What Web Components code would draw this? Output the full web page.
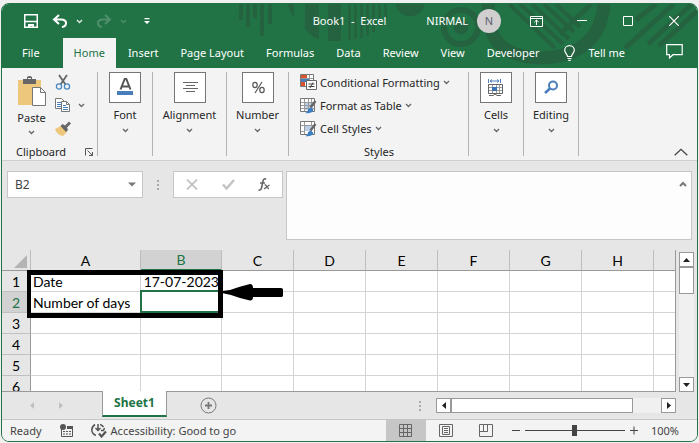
<!DOCTYPE html>
<html lang="en">
<head>
<meta charset="utf-8">
<title>Book1 - Excel</title>
<style>
html{background:#f0f0f0}
body{margin:0;font:11px/16px "Noto Sans","Open Sans",sans-serif;color:#262626}
</style>
</head>
<body>
<xl-window>
  <xl-header slot="header"></xl-header>
  <xl-ribbon slot="ribbon">
    <xl-clipboard></xl-clipboard>
    <xl-group label="Font" style="--w:55px"><svg width="31" height="29" viewBox="0 0 31 29"><path d="M10.500 16.500 14.700 6h1.600l4.200 10.500M12 13.500h7" fill="none" stroke="#555" stroke-width="2"/><path d="M7 18h16v4H7z" fill="#4a7ebb"/></svg></xl-group>
    <xl-group label="Alignment" style="--w:74px"><svg width="31" height="29" viewBox="0 0 31 29"><path d="M8 9.500h15M11 12.500h9M8 15.500h15M11 18.500h9" stroke="#666"/></svg></xl-group>
    <xl-group label="Number" style="--w:62px"><svg width="31" height="29" viewBox="0 0 31 29" fill="none" stroke="#555" stroke-width="1.200"><ellipse cx="12" cy="12" rx="2.200" ry="2.700"/><ellipse cx="19" cy="17" rx="2.200" ry="2.700"/><path d="m19 9-7 11"/></svg></xl-group>
    <xl-styles></xl-styles>
    <xl-group label="Cells" style="--w:55px"><svg width="31" height="29" viewBox="0 0 31 29" fill="none"><path d="M7.500 6v4M19.500 6v4M9 8h9m-7-1.500L9 8l2 1.500m5-3L18 8l-2 1.500" stroke="#4a7ebb"/><path d="M7.500 11.500h14v9h-14zM7.500 14.500h14M7.500 17.500h14M11.500 11.500v9M15.500 11.500v9M18.500 11.500v9" stroke="#999"/><path d="M7.500 11.500h14v9h-14zM8 22.500h4l2-1.500 2 1.500h4" stroke="#666"/><path d="M11 14h5v4h-5z" fill="#3a72b5"/></svg></xl-group>
    <xl-group label="Editing" style="--w:55px"><svg width="31" height="29" viewBox="0 0 31 29" fill="none" stroke="#4a7ebb"><circle cx="17" cy="12.500" r="4" stroke-width="2"/><path d="m14 15.500-5 4.500" stroke-width="2.600"/></svg></xl-group>
  </xl-ribbon>
  <xl-formula slot="formula" cell="B2"></xl-formula>
  <xl-grid slot="grid"></xl-grid>
  <xl-sheets slot="sheets" name="Sheet1"></xl-sheets>
  <xl-status slot="status"></xl-status>
</xl-window>
<script>
const base = `*{box-sizing:border-box}svg{display:block;flex:none}
button{appearance:none;background:none;border:0;padding:0;margin:0;font:inherit;color:inherit;display:flex;align-items:center;justify-content:center;flex:none}
input{font:inherit;color:inherit;border:0;margin:0;padding:0;outline:0;background:none;min-width:0}`;
const define = (name, render) => customElements.define(name, class extends HTMLElement {
  connectedCallback() {
    const [css, html] = render(this);
    const t = document.createElement('template');
    t.innerHTML = `<style>${base}${css}</style>${html}`;
    this.attachShadow({mode: 'open'}).append(t.content.cloneNode(true));
  }
});
const chev = (c = '#666') => `<svg width="7" height="5" viewBox="0 0 7 5"><path d="m1 1 2.500 2.500L6 1" fill="none" stroke="${c}" stroke-width="1.300"/></svg>`;
const dots = `<svg width="2" height="10" viewBox="0 0 2 10"><path d="M0 0h2v2H0zM0 4h2v2H0zM0 8h2v2H0z" fill="#aaa"/></svg>`;

define('xl-window', () => [`
:host{display:flex;flex-direction:column;height:calc(100vh - 4px);margin:3px 1px 1px;border:1px solid #217346;border-radius:8px;overflow:hidden;background:#e6e6e6}
:host,.grid{box-sizing:border-box}.grid{flex:1;min-height:0;display:flex}::slotted(xl-grid){flex:1;min-width:0}`,
`<slot name="header"></slot><slot name="ribbon"></slot><slot name="formula"></slot><div class="grid"><slot name="grid"></slot></div><slot name="sheets"></slot><slot name="status"></slot>`]);

define('xl-header', () => [`
:host{display:block;position:relative;background:#217346;color:#fff}
.art{position:absolute;top:0;right:0}
.bar{position:relative;display:grid;grid-template-columns:1fr auto 1fr;align-items:center;height:34px}
.quick{display:flex;align-items:center;padding-left:22px}
.quick .small{margin-left:8px}.quick .more{margin-left:17px}.quick .redo{margin-left:13px}.quick .undo{margin-left:14px}
.title{white-space:pre}
.win{display:flex;align-items:center;justify-content:flex-end}
.avatar{width:24px;height:24px;border-radius:50%;background:#d0cece;color:#5b6070;display:grid;place-items:center;margin:0 12px 0 9px}
.win button{width:46px;height:32px}
nav{position:relative;display:flex;height:30px;padding-left:9px;padding-right:14px}
nav button{padding:0 11px 1px;height:30px}
nav .on{background:#f3f3f3;color:#217346;margin:0 1px 0 12px}
nav .tell{gap:13px;padding-left:14px}nav .talk{margin-left:auto;padding:0 0 4px}`,
`<svg class="art" width="467" height="64" viewBox="230 4 467 64" fill="none" stroke="#25623f">
<path d="M241 4v16M248 4v23M255 4v14M262 4v32M270 4v20" stroke-width="4"/>
<path d="M287 4h7v14zM305 4h14v35q-8-2-14-10zM328 4h13v37h-13z" fill="#25623f" stroke="none"/>
<path d="M349.500 4v36M355.500 4v35M361.500 4v34M367.500 4v32M373.500 4v28M379.500 4v22M385.500 4v14" stroke-width="2.500"/>
<path d="M396 4h28a14 12 0 0 1-28 0z" fill="#25623f" stroke="none"/>
<circle cx="461" cy="27" r="17" stroke-width="6"/><circle cx="461" cy="27" r="7" fill="#25623f"/>
<path d="M496 4q-7 57 55 57 58-4 60-57" stroke-width="13" transform="translate(-7 -3)"/>
<path d="m509 4 46 44M520 4l43 40M532 4l37 35M544 4l30 28M556 4l24 23" stroke-width="4"/>
<path d="m560 34 31-30M625 48l49-44M648 44l44-40M636 20l20-16M659 46l38-35" stroke-width="5"/></svg>
<div class="bar">
<div class="quick">
<button aria-label="Save"><svg width="14" height="14" viewBox="0 0 14 14"><path d="M.75.75h12.500v12.500H.75zM1 7.500h12" fill="none" stroke="#fff" stroke-width="1.500"/><path d="M4 10h6v4H8.500v-2H6.500v2H4z" fill="#fff"/></svg></button>
<button class="undo" aria-label="Undo"><svg width="16" height="14" viewBox="0 0 16 14" fill="none" stroke="#fff" stroke-width="2"><path d="M7 1 2 5.500 7 10M2 5.500h7q5 0 5 3.500t-4 4"/></svg></button>
<button class="small" aria-label="Undo list">${chev('#dfeee5')}</button>
<button class="redo" aria-label="Redo"><svg width="16" height="14" viewBox="0 0 16 14" fill="none" stroke="#4f8f6b" stroke-width="2"><path d="m9 1 5 4.500L9 10m5-4.500H7Q2 5.500 2 9t4 4"/></svg></button>
<button class="small" aria-label="Redo list">${chev('#4f8f6b')}</button>
<button class="more" aria-label="Customize"><svg width="6" height="7" viewBox="0 0 6 7"><path d="M.5 0h5v1.200h-5zM0 3h6L3 6z" fill="#fff"/></svg></button>
</div>
<div class="title">Book1  -  Excel</div>
<div class="win"><span>NIRMAL</span><span class="avatar">N</span>
<button aria-label="Ribbon display"><svg width="13" height="11" viewBox="0 0 13 11" fill="none" stroke="#fff"><path d="M.5.5h12v10H.5zM.5 2.500h12M6.500 9V4M4.300 6.200 6.500 4l2.200 2.200"/></svg></button>
<button aria-label="Minimize"><svg width="10" height="10" viewBox="0 0 10 10"><path d="M0 4.500h10" stroke="#fff"/></svg></button>
<button aria-label="Maximize"><svg width="10" height="10" viewBox="0 0 10 10"><path d="M.5.500h9v9h-9z" fill="none" stroke="#fff"/></svg></button>
<button aria-label="Close"><svg width="10" height="10" viewBox="0 0 10 10"><path d="m0 0 10 10M10 0 0 10" stroke="#fff" stroke-width="1.200"/></svg></button></div>
</div>
<nav><button>File</button><button class="on">Home</button><button>Insert</button><button>Page Layout</button><button>Formulas</button><button>Data</button><button>Review</button><button>View</button><button>Developer</button>
<button class="tell"><svg width="11" height="16" viewBox="0 0 11 16" fill="none" stroke="#fff" stroke-width="1.200"><path d="M3.500 11.500C3.500 9 .7 8 .7 5.200a4.800 4.600 0 0 1 9.600 0C10.300 8 7.500 9 7.500 11.500zM3.500 13.500h4M4.300 15.300h2.400"/></svg>Tell me</button>
<button class="talk" aria-label="Comments"><svg width="17" height="15" viewBox="0 0 17 15" fill="none" stroke="#fff" stroke-width="1.200"><path d="M.7.700h15.500v10H7L3.500 14v-3.300H.7z"/></svg></button></nav>`]);

define('xl-ribbon', () => [`
:host{display:flex;background:#f3f3f3;border-bottom:1px solid #cfcfcf;padding:4px 0}
.end{margin-left:auto;display:flex;align-items:flex-end;padding:0 9px 0 0}`,
`<slot></slot><div class="end"><button aria-label="Collapse ribbon"><svg width="14" height="8" viewBox="0 0 14 8"><path d="m.7 7.300 6.300-6 6.300 6" fill="none" stroke="#444" stroke-width="1.300"/></svg></button></div>`]);

define('xl-group', el => [`
:host{box-sizing:border-box;flex:none;width:var(--w);height:84px;border-right:1px solid #b3b3b3}
button{flex-direction:column;width:100%}
.pic{display:block;border:1px solid #767676;background:#fff;width:32px;height:31px;overflow:hidden}
.t{margin:4px 0 5px}`,
`<button><span class="pic"><slot></slot></span><span class="t">${el.getAttribute('label')}</span>${chev()}</button>`]);

define('xl-clipboard', () => [`
:host{box-sizing:border-box;flex:none;width:96px;height:84px;border-right:1px solid #b3b3b3;display:flex;flex-direction:column;justify-content:space-between}
.top{display:flex;padding-left:14px;gap:8px}
.paste{flex-direction:column;width:31px;justify-content:flex-start;padding-top:4px}.paste svg:last-child{margin-top:4px}.paste span{margin-top:3px}
.tools{display:flex;flex-direction:column;gap:8px;padding-top:2px}.tools div{display:flex;gap:7px;align-items:center}
.foot{display:flex;justify-content:space-between;align-items:center;padding:0 4px 0 14px;height:17px;margin-bottom:-4px}`,
`<div class="top"><button class="paste"><svg width="29" height="31" viewBox="0 0 29 31"><path d="M1 4h23v25H1z" fill="#edc77c"/><path d="M6 3h4V1q2.500-2 5 0v2h4v5H6z" fill="#666"/><path d="M11 2.500h3" stroke="#f3f3f3"/><path d="M15.500 11.500h8l5 5v13h-13z" fill="#fff" stroke="#777"/><path d="M23.500 11.500v5h5" fill="none" stroke="#777"/></svg><span>Paste</span>${chev()}</button>
<div class="tools"><div><button aria-label="Cut"><svg width="16" height="16" viewBox="0 0 16 16" fill="none"><path d="m4 1 6.500 9.500M12 1 5.500 10.500" stroke="#666" stroke-width="1.800"/><circle cx="4" cy="12.500" r="2.600" stroke="#4a8ac4" stroke-width="1.300"/><circle cx="12" cy="12.500" r="2.600" stroke="#4a8ac4" stroke-width="1.300"/></svg></button></div>
<div><button aria-label="Copy"><svg width="16" height="15" viewBox="0 0 16 15" fill="#fff" stroke="#777"><path d="M.5.500h6l3 3v7h-9z"/><path d="M2 4.500h4M2 6.500h4M2 8.500h4" stroke="#4a7ebb"/><path d="M6.500 3.500h5l3 3v7h-8z"/><path d="M11.500 3.500v3h3" fill="none"/><path d="M8 7.500h3M8 9.500h5M8 11.500h5" stroke="#4a7ebb"/></svg></button><button aria-label="Copy options">${chev()}</button></div>
<div><button aria-label="Format painter"><svg width="16" height="15" viewBox="0 0 16 15"><path d="m0 8 6-3 6 6-4 4q-6-1-8-7z" fill="#edc77c"/><path d="m5.500 5 2-2 2.500 1.500L14 .5 16 2.500l-4 4 1 2.500-2 2z" fill="#666"/></svg></button></div></div></div>
<div class="foot"><span>Clipboard</span><button aria-label="Clipboard options"><svg width="8" height="8" viewBox="0 0 8 8" fill="none" stroke="#555"><path d="M.5 7.500v-7h7M2.500 2.500l5 5M7.500 4v3.500H4"/></svg></button></div>`]);

const sheet = `<path d="M.5 1.500h14v13H.5z" fill="#fff" stroke="#777"/>`;
const brush = `<path d="m15.500 4-5 6.500" stroke="#666" stroke-width="2.400"/><path d="M5 16q3-1 3-4l3-1.500 2.500 2.500q-2 4-8.500 3z" fill="#3a7fc4"/>`;
define('xl-styles', () => [`
:host{box-sizing:border-box;flex:none;width:180px;height:84px;border-right:1px solid #b3b3b3;display:flex;flex-direction:column;padding-left:11px}
button{height:23px;gap:3px;align-self:flex-start;padding-bottom:2px}.f{text-align:center;padding-right:10px;margin-top:3px}`,
`<button><svg width="17" height="17" viewBox="0 0 17 17"><path d="M.5.500h13v12H.5z" fill="#fff" stroke="#777"/><path d="M1 1h6v4H1zM1 8h4v4H1z" fill="#d9532c"/><path d="M1 5h8v3H1z" fill="#4a7ebb"/><path d="M9.500 1v6M1 4.500h12" stroke="#999"/><path d="M6.500 6.500h10v9h-10z" fill="#fff" stroke="#666"/><path d="M8.500 10h6M8.500 12.500h6M13 8.500l-3 5.500" stroke="#444"/></svg>Conditional Formatting ${chev()}</button>
<button><svg width="17" height="17" viewBox="0 0 17 17">${sheet}<path d="M4 5h9v8H4z" fill="#b9cde5"/><path d="M4.500 2v12M8.500 2v12M11.500 2v12M1 5.500h13M1 8.500h13M1 11.500h13" stroke="#999"/>${brush}</svg>Format as Table ${chev()}</button>
<button><svg width="17" height="17" viewBox="0 0 17 17">${sheet}<path d="M5 6h7v5H5z" fill="#b9cde5"/><path d="M4.500 2v12M1 5.500h13M11.500 2v4M1 11.500h4" stroke="#999"/>${brush}</svg>Cell Styles ${chev()}</button><div class="f">Styles</div>`]);

define('xl-formula', el => [`
:host{display:flex;align-items:flex-start;padding:10px 5px}
.name{display:flex;align-items:center;width:136px;height:27px;border:1px solid #c6c6c6;background:#fff;padding:0 6px 0 7px;font-size:12px;color:#444}
.name input{flex:1}.d{display:grid;place-items:center;width:30px;height:27px}
.fx{display:flex;width:110px;height:27px;border:1px solid #c6c6c6;background:#fff;margin-right:3px}.fx button{flex:1}
.text{flex:1;display:flex;height:69px;border:1px solid #c6c6c6;background:#fdfdfd;min-width:0}
textarea{flex:1;min-width:0;border:0;background:none;resize:none;outline:0;margin:0}
.text button{align-self:flex-start;padding:9px 4px 0 0}`,
`<div class="name"><input aria-label="Name box" value="${el.getAttribute('cell')}"><button aria-label="Names"><svg width="8" height="5" viewBox="0 0 8 5"><path d="M0 .5h8L4 4.500z" fill="#777"/></svg></button></div>
<div class="d">${dots}</div>
<div class="fx"><button aria-label="Cancel"><svg width="12" height="11" viewBox="0 0 12 11"><path d="m1 .5 10 10M11 .5l-10 10" stroke="#c4c4c4" stroke-width="1.800"/></svg></button><button aria-label="Enter"><svg width="13" height="11" viewBox="0 0 13 11"><path d="M1 5.500 4.500 9.500 12 1" fill="none" stroke="#c4c4c4" stroke-width="2.500"/></svg></button><button aria-label="Insert function"><svg width="12" height="13" viewBox="0 0 12 13" fill="none" stroke="#666"><path d="M8 1.500Q6-.5 5 3L3.500 10Q3 12.500.5 12M2 5h5" stroke-width="1.600"/><path d="M6.500 7q1.500-.5 2 1.500T11 10.500M11.500 7 6 11" stroke-width="1.300"/></svg></button></div>
<div class="text"><textarea aria-label="Formula bar"></textarea><button aria-label="Collapse formula bar"><svg width="8" height="6" viewBox="0 0 8 6"><path d="m1 5 3-3 3 3" fill="none" stroke="#777" stroke-width="2"/></svg></button></div>`]);

define('xl-grid', () => {
  const cols = [...'ABCDEFGH'];
  const data = {A1: 'Date', B1: '17-07-2023', A2: 'Number of days'};
  const rows = [1, 2, 3, 4, 5, 6].map(r => `<tr><th scope="row" class="${r === 2 ? 'sel' : ''}">${r}</th>${cols.map(c => `<td class="${c === 'B' ? 'num' : ''}">${data[c + r] || ''}</td>`).join('')}<td></td></tr>`).join('');
  return [`
:host{display:flex;gap:3px;padding-right:3px;font-family:Lato,"Open Sans",sans-serif;font-size:14px;color:#000}
.view{position:relative;flex:1;min-width:0;overflow:hidden;border-right:1px solid #999;border-bottom:1px solid #999;background:#fff}
table{table-layout:fixed;width:100%;border-collapse:separate;border-spacing:0;line-height:18px}
th,td{height:21px;padding:0;border-right:1px solid #d4d4d4;border-bottom:1px solid #d4d4d4;white-space:nowrap}
td{padding:2px 2px 0}td:last-child,thead th:last-child{border-right:0}
th{background:#e6e6e6;font-weight:400;padding-top:1px}
thead th{border-bottom-color:#999;border-right-color:#bdbdbd}tbody th{border-right-color:#999;border-bottom-color:#c0c0c0}
.sel{background:#d2d2d2;color:#217346}thead .sel{border-bottom:2px solid #217346}
.num{text-align:right}
.corner svg{margin:2px 3px 0 auto}
.active{position:absolute;left:138px;top:40px;width:82px;height:23px;border:2px solid #217346}
.frame{position:absolute;left:25px;top:20px;width:196px;height:48px;border:5px solid #000;border-left-width:4px}
.arrow{position:absolute;left:220px;top:34px}
.bar{display:flex;flex-direction:column;width:15px;margin-top:2px;background:#f0f0f0}
.bar button,.thumb{border:1px solid #999;background:#fff;width:15px;height:15px}.thumb{height:27px}.bar button:last-child{margin-top:auto}`,
`<div class="view"><table><colgroup><col style="width:29px"><col style="width:110px"><col style="width:81px">${'<col style="width:72px">'.repeat(6)}<col></colgroup>
<thead><tr><th class="corner" aria-label="Select all"><svg width="13" height="13" viewBox="0 0 13 13"><path d="M13 0v13H0z" fill="#b4b4b4"/></svg></th>${cols.map(c => `<th scope="col" class="${c === 'B' ? 'sel' : ''}">${c}</th>`).join('')}<th></th></tr></thead><tbody>${rows}</tbody></table>
<div class="active"></div><div class="frame"></div>
<svg class="arrow" width="62" height="18" viewBox="0 0 62 18"><path d="M0 7 8 6 17 3 28 0q3 0 3 4h28q2 0 2 1.500v6q0 1.500-2 1.500H31q0 3.500-3 3.500L18 14 9 11 0 9z"/></svg></div>
<div class="bar"><button aria-label="Scroll up"><svg width="7" height="4" viewBox="0 0 7 4"><path d="M0 4h7L3.500 0z" fill="#222"/></svg></button><div class="thumb"></div><button aria-label="Scroll down"><svg width="7" height="4" viewBox="0 0 7 4"><path d="M0 0h7L3.500 4z" fill="#222"/></svg></button></div>`];
});

define('xl-sheets', el => [`
:host{display:flex;align-items:center;height:27px;padding:0 21px 0 26px}
.nav{display:flex;gap:21px}.nav button{width:8px;height:8px}
.tab{width:65px;height:26px;align-self:flex-start;position:relative;margin:-1px 0 0 37px;background:#fff;border:1px solid #999;border-top:0;border-bottom:2px solid #217346;color:#217346;font-weight:700;font-size:12px}
.add{margin-left:33px}.d{margin:0 15px 0 auto}
.bar{display:flex;width:37%;background:#f0f0f0}.bar button,.thumb{width:15px;height:15px;background:#fff;border:1px solid #999}.bar .thumb{width:76%;flex:0 1 auto}.bar button:last-child{margin-left:auto}`,
`<div class="nav"><button aria-label="Previous sheet"><svg width="4" height="7" viewBox="0 0 4 7"><path d="M4 0v7L0 3.500z" fill="#c0c0c0"/></svg></button><button aria-label="Next sheet"><svg width="4" height="7" viewBox="0 0 4 7"><path d="M0 0v7l4-3.500z" fill="#c0c0c0"/></svg></button></div>
<button class="tab">${el.getAttribute('name')}</button>
<button class="add" aria-label="New sheet"><svg width="17" height="17" viewBox="0 0 17 17" fill="none" stroke="#777"><circle cx="8.500" cy="8.500" r="7.500"/><path d="M8.500 5v7M5 8.500h7" stroke-width="1.800"/></svg></button>
<div class="d">${dots}</div>
<div class="bar"><button aria-label="Scroll left"><svg width="4" height="7" viewBox="0 0 4 7"><path d="M4 0v7L0 3.500z" fill="#222"/></svg></button><div class="thumb"></div><button aria-label="Scroll right"><svg width="4" height="7" viewBox="0 0 4 7"><path d="M0 0v7l4-3.500z" fill="#222"/></svg></button></div>`]);

define('xl-status', () => [`
:host{box-sizing:border-box;display:flex;align-items:center;height:22px;border-top:1px solid #c6c6c6;background:#f3f3f3;padding:0 18px 0 8px;color:#444}
.macro{margin:0 18px}.acc{gap:4px}
.views{display:flex;align-self:stretch;margin-left:auto}.views button{width:40px}.views .on{background:#c6c6c6}
.zoom{display:flex;align-items:center;gap:5px;margin-right:13px}
input[type=range]{appearance:none;width:100px;height:14px}
input::-webkit-slider-runnable-track{height:1px;background:#444}
input::-webkit-slider-thumb{appearance:none;width:5px;height:11px;margin-top:-5px;background:#444}`,
`<span>Ready</span>
<button class="macro" aria-label="Record macro"><svg width="13" height="13" viewBox="0 0 13 13"><path d="M1.500 5v7.500h11v-10H7" fill="none" stroke="#555"/><path d="M7 2h6v3H7z" fill="#555"/><path d="M3 7.500h2M6 7.500h2M9 7.500h2M3 10h2M6 10h2M9 10h2" stroke="#555"/><circle cx="3" cy="3" r="3" fill="#555"/></svg></button>
<button class="acc"><svg width="16" height="15" viewBox="0 0 16 15" fill="none" stroke="#555" stroke-width="1.500"><path d="M4 1.500Q.8 3.500.8 7t4 5.500M9 1.500q2 .5 3.500 2.500M7 1v6.500M4.500 5 7 7.500 9.500 5M13.500 5l-1 2.500H10"/><path d="m8 10.500 2.500 3L15 8.500" stroke-width="2.200"/></svg>Accessibility: Good to go</button>
<div class="views"><button class="on" aria-label="Normal"><svg width="13" height="13" viewBox="0 0 13 13" fill="none" stroke="#666"><path d="M.5.500h12v12H.5zM4.500.5v12M8.500.5v12M.5 4.500h12M.5 8.500h12"/></svg></button>
<button aria-label="Page layout"><svg width="14" height="13" viewBox="0 0 14 13" fill="none" stroke="#666"><path d="M.5.500h13v12H.5zM3.500 2.500h7v8h-7zM5 4.500h4M5 6.500h4M5 8.500h4"/></svg></button>
<button aria-label="Page break preview"><svg width="14" height="13" viewBox="0 0 14 13" fill="none" stroke="#666"><path d="M.5.500h13v12H.5zM4.500.5v7M8.500.5v7h-8M.5 7.500h8"/></svg></button></div>
<div class="zoom"><button aria-label="Zoom out"><svg width="14" height="9" viewBox="0 0 14 9"><path d="M6 4.500h8" stroke="#444"/></svg></button><input type="range" aria-label="Zoom" min="0" max="200" value="100"><button aria-label="Zoom in"><svg width="8" height="9" viewBox="0 0 8 9"><path d="M0 4.500h8M4 .5v8" stroke="#444"/></svg></button></div><span>100%</span>`]);
</script>
</body>
</html>
